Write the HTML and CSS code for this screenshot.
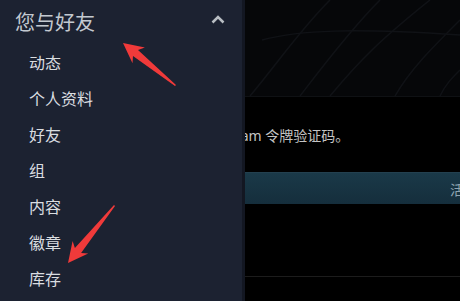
FILE: index.html
```html
<!DOCTYPE html>
<html>
	<head>
		<meta charset="UTF-8">
		<title>您与好友</title>
		<link rel="stylesheet" href="styles.css">
	</head>
	<body>
		<div class="page">
			<div class="banner">
				<svg class="bannerLines" width="460" height="96" viewBox="0 0 460 96">
					<path d="M250 96 C280 60 300 30 330 0" />
					<path d="M300 96 C320 70 350 30 380 0" />
					<path d="M330 96 C360 60 380 40 430 0" />
					<path d="M395 96 C410 70 430 50 460 20" />
					<path d="M262 40 C300 30 350 28 460 35" />
					<path d="M440 96 C445 85 452 78 460 70" />
				</svg>
			</div>
			<div class="notice">
				<p class="noticeText">Steam 令牌验证码。</p>
			</div>
			<div class="tabBar">
				<span class="tabText">活动</span>
			</div>
			<div class="listArea">
				<div class="listRow"></div>
			</div>
		</div>

		<!-- 展开的菜单 -->
		<div class="flyout">
			<div class="flyoutHead">
				<span class="flyoutTitle">您与好友</span>
				<svg class="chevron" width="14" height="9" viewBox="0 0 14 9">
					<path d="M1.5 7.5 L7 2 L12.5 7.5" />
				</svg>
			</div>
			<div class="flyoutList">
				<a href="#">动态</a>
				<a href="#">个人资料</a>
				<a href="#">好友</a>
				<a href="#">组</a>
				<a href="#">内容</a>
				<a href="#">徽章</a>
				<a href="#">库存</a>
			</div>
		</div>

		<!-- 标注箭头 -->
		<svg class="marks" width="460" height="301" viewBox="0 0 460 301">
			<polygon points="123,43 144.9,47.6 138,50 176,85 175,86 133,56 132.5,63.2" />
			<polygon points="68,263 72.6,241.1 74.9,248 114,205 115,206 81.1,253 88.2,253.5" />
		</svg>
	</body>
</html>
```

FILE: styles.css
```css
* {
	margin: 0;
	padding: 0;
}

a {
	text-decoration: none;
}

body {
	width: 460px;
	height: 301px;
	overflow: hidden;
	background: #000;
	font-family: "Noto Sans", "Noto Sans CJK SC", sans-serif;
	position: relative;
}

.page {
	display: flex;
	flex-direction: column;
}

.banner {
	height: 96px;
	background: #060709;
	border-bottom: 1px solid #0f1114;
}

.bannerLines {
	display: block;
}

.bannerLines path {
	fill: none;
	stroke: #101216;
	stroke-width: 1.5;
}

.notice {
	height: 75px;
	display: flex;
	align-items: center;
}

.noticeText {
	padding-left: 220px;
	font-size: 14px;
	color: #c4c4c4;
	white-space: nowrap;
}

.tabBar {
	height: 31px;
	background: linear-gradient(#1a3948, #152e3c);
	border-top: 1px solid #23404f;
	display: flex;
	align-items: center;
	overflow: hidden;
}

.tabText {
	padding-left: 450px;
	font-size: 14px;
	color: #8fa3b0;
	white-space: nowrap;
}

.listArea {
	height: 97px;
}

.listRow {
	height: 72px;
	border-bottom: 1px solid #1c1c1c;
}

.flyout {
	position: absolute;
	left: 0;
	top: 0;
	width: 242px;
	height: 301px;
	background: #1c2231;
	border-right: 3px solid #131722;
}

.flyoutHead {
	height: 42px;
	display: flex;
	align-items: center;
	justify-content: space-between;
	padding: 0 15px;
}

.flyoutTitle {
	font-size: 20px;
	color: #c3c9d0;
}

.chevron {
	margin-right: 2px;
	margin-top: -4px;
}

.chevron path {
	fill: none;
	stroke: #b9bec3;
	stroke-width: 2.5;
}

.flyoutList {
	padding-top: 3px;
}

.flyoutList a {
	display: block;
	height: 36px;
	line-height: 36px;
	padding-left: 29px;
	font-size: 16px;
	color: #dadde0;
}

.marks {
	position: absolute;
	left: 0;
	top: 0;
}

.marks polygon {
	fill: #f03a3a;
}
```
